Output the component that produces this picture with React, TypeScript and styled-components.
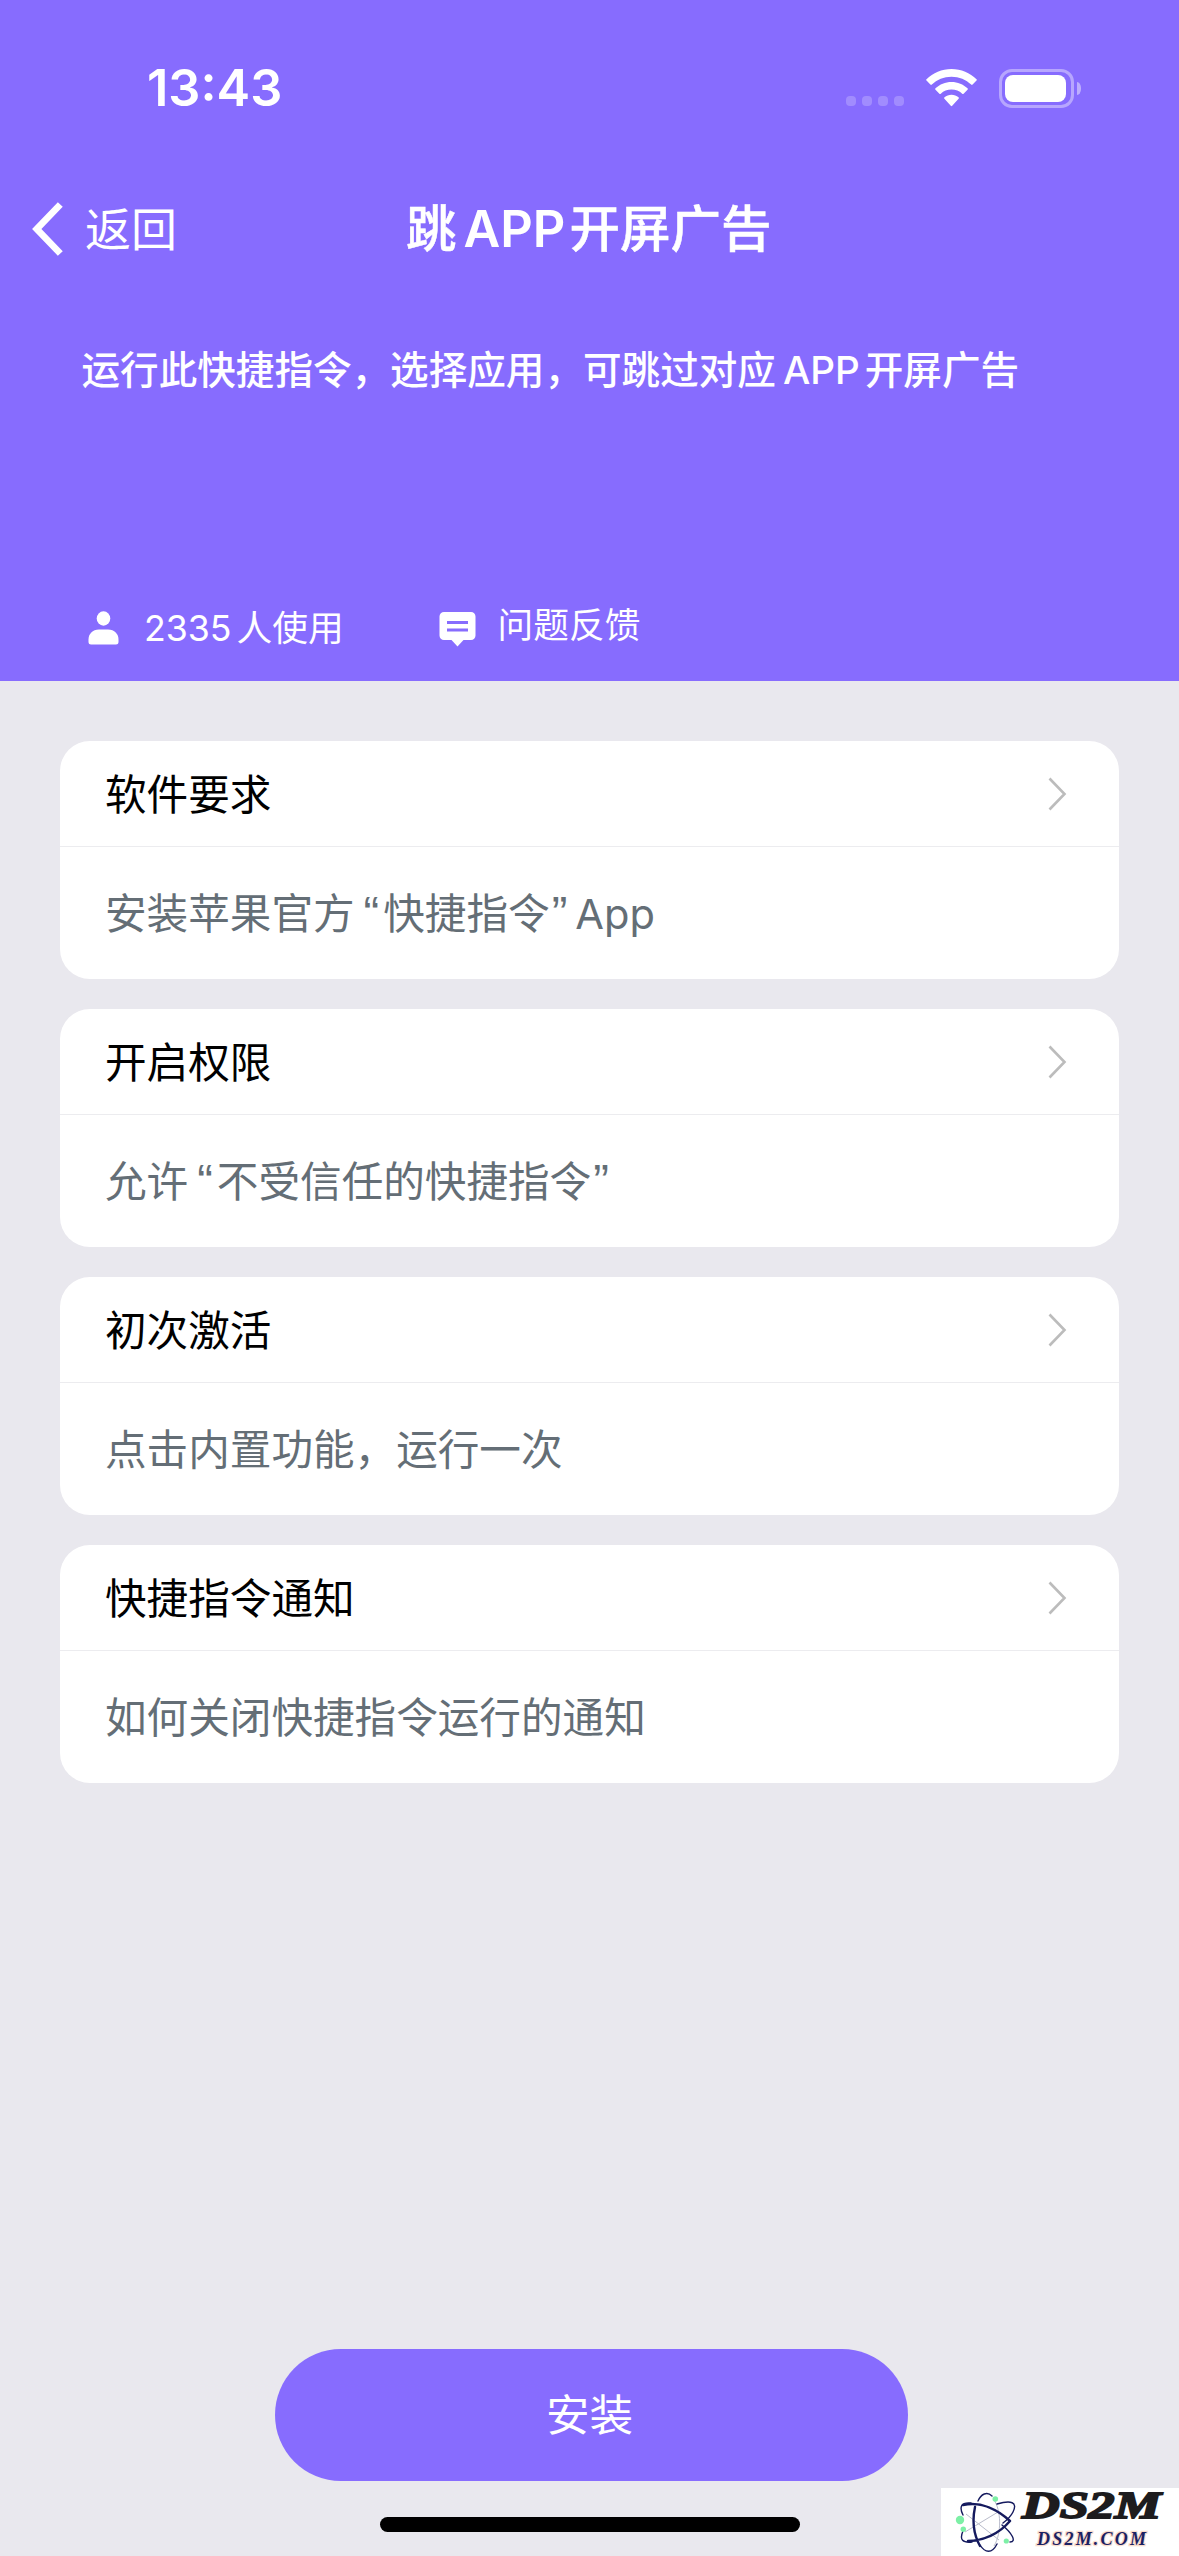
import React from 'react';
import styled, { createGlobalStyle } from 'styled-components';

const GlobalStyle = createGlobalStyle`
  *, *::before, *::after { box-sizing: border-box; }
  body { margin: 0; background: #e9e8ee; }
`;

const fontStack = `Inter, 'Noto Sans CJK SC', sans-serif`;

const Screen = styled.div`
  position: relative;
  display: flex;
  flex-direction: column;
  width: 1179px;
  height: 2556px;
  overflow: hidden;
  background: #e9e8ee;
  font-family: ${fontStack};
  white-space: nowrap;
  text-autospace: no-autospace;
  text-spacing-trim: space-all;
`;

const Hero = styled.header`
  display: flex;
  flex-direction: column;
  height: 681px;
  flex: none;
  background: #876cfe;
  color: #fff;
`;

const StatusBar = styled.div`
  display: flex;
  justify-content: space-between;
  align-items: center;
  height: 176px;
  padding: 0 98px 0 147px;
`;

const Clock = styled.div`
  font-size: 50.5px;
  font-weight: 600;
  line-height: 60px;
`;

const StatusIcons = styled.div`
  display: flex;
  align-items: center;
`;

const SignalDots = styled.div`
  display: flex;
  gap: 6px;
  margin: 26px 22px 0 0;
`;

const SignalDot = styled.span`
  width: 10px;
  height: 10px;
  border-radius: 4px;
  background: rgba(255, 255, 255, 0.22);
`;

const Battery = styled.div`
  display: flex;
  align-items: center;
  gap: 3px;
  margin-left: 22px;
`;

const BatteryShell = styled.div`
  width: 75px;
  height: 39px;
  padding: 3px;
  border: 3px solid rgba(255, 255, 255, 0.4);
  border-radius: 13px;
`;

const BatteryLevel = styled.div`
  width: 61px;
  height: 27px;
  border-radius: 8px;
  background: #fff;
`;

const BatteryNub = styled.div`
  width: 4px;
  height: 13px;
  border-radius: 0 4px 4px 0 / 0 6px 6px 0;
  background: rgba(255, 255, 255, 0.45);
`;

const NavBar = styled.nav`
  display: grid;
  grid-template-columns: 406px 1fr;
  align-items: center;
  height: 106px;
`;

const BackButton = styled.div`
  display: flex;
  align-items: center;
  gap: 21px;
  padding-left: 32px;
  font-size: 46px;
  line-height: 60px;
`;

const NavTitle = styled.h1`
  margin: 0;
  font-size: 50.5px;
  font-weight: 500;
  line-height: 60px;
  -webkit-text-stroke: 0.5px #fff;
`;

const Latin = styled.span<{ $before?: number; $after?: number; $weight?: number }>`
  margin-left: ${(p) => p.$before ?? 0}px;
  margin-right: ${(p) => p.$after ?? 0}px;
  font-weight: ${(p) => p.$weight ?? 'inherit'};
  -webkit-text-stroke: 0;
`;

const Quote = styled(Latin)`
  font-family: 'Liberation Sans', Arial, sans-serif;
  font-size: 47px;
  line-height: 0;
`;

const Description = styled.p`
  margin: 58px 0 0 81.5px;
  height: 60px;
  font-size: 38.6px;
  font-weight: 500;
  line-height: 60px;
`;

const Stats = styled.div`
  display: flex;
  align-items: flex-start;
  margin-top: 197px;
  padding-left: 88px;
`;

const Stat = styled.div<{ $gap: number; $iconTop: number; $textTop: number }>`
  display: flex;
  gap: ${(p) => p.$gap}px;
  font-size: 35.7px;
  line-height: 60px;
  > svg { margin-top: ${(p) => p.$iconTop}px; }
  > span { margin-top: ${(p) => p.$textTop}px; }
  & + & { margin-left: 95px; }
`;

const CardList = styled.main`
  display: flex;
  flex-direction: column;
  gap: 30px;
  padding: 60px 60px 0;
`;

const Card = styled.section`
  height: 238px;
  border-radius: 30px;
  background: #fff;
  font-size: 41.6px;
`;

const CardHead = styled.div`
  display: flex;
  align-items: center;
  justify-content: space-between;
  height: 106px;
  padding: 0 52px 0 45px;
  border-bottom: 1px solid #ececef;
  color: #000;
`;

const CardTitle = styled.h2`
  margin: 2px 0 0;
  font-size: inherit;
  font-weight: 400;
  line-height: 60px;
`;

const CardBody = styled.p`
  margin: 0;
  padding: 37px 45px 0;
  color: #646e76;
  line-height: 60px;
`;

const Footer = styled.footer`
  display: flex;
  flex-direction: column;
  align-items: center;
  margin-top: auto;
  padding-bottom: 24px;
`;

const InstallButton = styled.button`
  width: 633px;
  height: 132px;
  margin-left: 4px;
  padding: 2px 4px 0 0;
  border: 0;
  border-radius: 66px;
  background: #876cfe;
  color: #fff;
  font-family: inherit;
  font-size: 43.6px;
  line-height: 60px;
`;

const HomeIndicator = styled.div`
  width: 420px;
  height: 15px;
  margin-top: 36px;
  border-radius: 8px;
  background: #000;
`;

const Watermark = styled.div`
  position: absolute;
  right: 0;
  bottom: 0;
  width: 238px;
  height: 68px;
  background: #fff;
  > svg { display: block; overflow: visible; }
`;

const WifiIcon = () => (
  <svg width="51" height="38" viewBox="0 0 51 38" fill="#fff">
    <path d="M25.5 0C15.8 0 7 3.8.5 10.2a1 1 0 0 0 0 1.4l3.9 4a1 1 0 0 0 1.4 0C10.900 10.700 17.900 7.700 25.500 7.700s14.600 3 19.700 7.900a1 1 0 0 0 1.400 0l3.900-4a1 1 0 0 0 0-1.400C44 3.800 35.200 0 25.500 0Z" />
    <path d="M25.500 13c-6.200 0-11.800 2.400-16 6.300a1 1 0 0 0 0 1.500l3.900 3.900a1 1 0 0 0 1.400 0c2.800-2.600 6.500-4.100 10.700-4.100s7.900 1.500 10.700 4.100a1 1 0 0 0 1.400 0l3.900-3.900a1 1 0 0 0 0-1.500c-4.200-3.900-9.800-6.300-16-6.300Z" />
    <path d="M25.500 25.800c-2.700 0-5.100.9-7 2.500a1 1 0 0 0-.1 1.500l6.400 7a1 1 0 0 0 1.400 0l6.400-7a1 1 0 0 0-.1-1.500c-1.900-1.600-4.300-2.500-7-2.500Z" />
  </svg>
);

const BackIcon = () => (
  <svg width="32" height="54" viewBox="0 0 32 54" fill="none">
    <path d="M28.300 2.500 4.800 27l23.500 24.500" stroke="#fff" strokeWidth="6.800" />
  </svg>
);

const UserIcon = () => (
  <svg width="31" height="34" viewBox="0 0 31 34" fill="#fff">
    <ellipse cx="15.500" cy="7.500" rx="6.800" ry="7.200" />
    <path d="M11 18.500h9c6.500 0 10.500 4.500 10.500 10v2.500c0 1.700-1.100 2.500-2.500 2.500H3C1.600 33.500.5 32.700.5 31V28.500C.5 23 4.500 18.500 11 18.500Z" />
  </svg>
);

const FeedbackIcon = () => (
  <svg width="37" height="35" viewBox="0 0 37 35">
    <path d="M5 0h27a4.500 4.500 0 0 1 4.500 4.500v19a4.500 4.500 0 0 1-4.500 4.500h-7.500l-6 6.500-6-6.500H5a4.500 4.500 0 0 1-4.500-4.500v-19A4.500 4.500 0 0 1 5 0Z" fill="#fff" />
    <path d="M8 10.500h21M8 18h21" stroke="#876cfe" strokeWidth="3" />
  </svg>
);

const DisclosureIcon = () => (
  <svg width="19" height="34" viewBox="0 0 19 34" fill="none">
    <path d="M1.500 1.500 16.500 17l-15 15.500" stroke="#bcbcbc" strokeWidth="2.600" />
  </svg>
);

const WatermarkLogo = () => (
  <svg width="238" height="68" viewBox="0 0 238 68">
    <g fill="none" stroke="#b9bccb" strokeWidth="1">
      <path d="M53 12c7 10 8 33 0 46M24 44 57 24M25 26l33 26" />
    </g>
    <g fill="none" stroke="#151a5e" strokeLinecap="round">
      <path d="M37 13C40 6 46 3 51 8M22 27c-4-8-2-13 8-12M56 16c14-4 21-2 16 8-2 4-6 8-10 11M22 43c-4 9 0 12 9 11M61 37c10 8 15 17 8 17M39 57c5 8 12 9 17-1" strokeWidth="1.400" />
      <path d="M22 17c18-4 35 5 47 16M69 33C58 46 42 53 27 53M34 19c-3 14-1 28 5 39" strokeWidth="2.400" />
    </g>
    <g fill="#7df0a6">
      <circle cx="54.300" cy="11" r="2.800" />
      <circle cx="19" cy="32" r="4.200" />
      <circle cx="22.300" cy="41.300" r="2.700" />
      <circle cx="65.300" cy="53" r="2.600" />
    </g>
    <text x="81" y="29.500" textLength="139" lengthAdjust="spacingAndGlyphs" fontFamily="'Liberation Serif', serif" fontSize="38" fontWeight="700" fontStyle="italic" fill="#1d1c1e" stroke="#1d1c1e" strokeWidth="1.800">DS2M</text>
    <text x="96" y="56.500" textLength="109" fontFamily="'Liberation Serif', serif" fontSize="18" fontWeight="700" fontStyle="italic" fill="#1b2163" stroke="#f8dccd" strokeWidth="2.500" paintOrder="stroke">DS2M.COM</text>
  </svg>
);

const cards: { title: string; body: React.ReactNode }[] = [
  {
    title: '软件要求',
    body: (
      <>
        安装苹果官方<Quote $before={9} $after={4}>“</Quote>快捷指令<Quote $before={2} $after={8}>”</Quote>
        <Latin>App</Latin>
      </>
    ),
  },
  {
    title: '开启权限',
    body: (
      <>
        允许<Quote $before={9} $after={4}>“</Quote>不受信任的快捷指令<Quote $before={2}>”</Quote>
      </>
    ),
  },
  { title: '初次激活', body: '点击内置功能，运行一次' },
  { title: '快捷指令通知', body: '如何关闭快捷指令运行的通知' },
];

export default function App() {
  return (
    <>
      <GlobalStyle />
      <Screen>
        <Hero>
          <StatusBar>
            <Clock>13:43</Clock>
            <StatusIcons>
              <SignalDots>
                {[0, 1, 2, 3].map((i) => <SignalDot key={i} />)}
              </SignalDots>
              <WifiIcon />
              <Battery>
                <BatteryShell><BatteryLevel /></BatteryShell>
                <BatteryNub />
              </Battery>
            </StatusIcons>
          </StatusBar>
          <NavBar>
            <BackButton><BackIcon /><span>返回</span></BackButton>
            <NavTitle>跳<Latin $before={7} $after={4} $weight={600}>APP</Latin>开屏广告</NavTitle>
          </NavBar>
          <Description>
            运行此快捷指令，选择应用，可跳过对应<Latin $before={7} $after={5}>APP</Latin>开屏广告
          </Description>
          <Stats>
            <Stat $gap={25} $iconTop={14} $textTop={1}>
              <UserIcon />
              <span><Latin $after={5}>2335</Latin>人使用</span>
            </Stat>
            <Stat $gap={22} $iconTop={15} $textTop={-2}>
              <FeedbackIcon />
              <span>问题反馈</span>
            </Stat>
          </Stats>
        </Hero>
        <CardList>
          {cards.map((card) => (
            <Card key={card.title}>
              <CardHead>
                <CardTitle>{card.title}</CardTitle>
                <DisclosureIcon />
              </CardHead>
              <CardBody>{card.body}</CardBody>
            </Card>
          ))}
        </CardList>
        <Footer>
          <InstallButton>安装</InstallButton>
          <HomeIndicator />
        </Footer>
        <Watermark><WatermarkLogo /></Watermark>
      </Screen>
    </>
  );
}
